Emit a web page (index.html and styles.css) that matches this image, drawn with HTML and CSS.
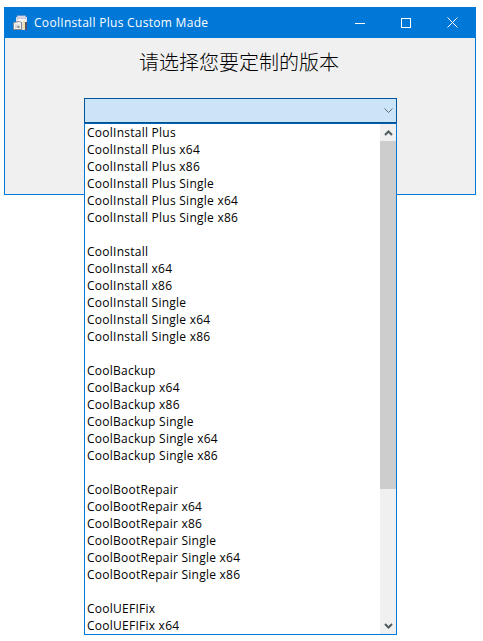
FILE: index.html
```html
<!DOCTYPE html>
<html>
<head>
    <meta charset="utf-8">
    <link rel="stylesheet" href="styles.css">
</head>
<body>
<div class="window">
    <div class="titlebar">
        <svg class="app-icon" width="16" height="16" viewBox="0 0 16 16">
            <path d="M3 2h11v13H3z" fill="#d9dbe6"/>
            <path d="M4 0.500h9v3H4z" fill="#b9b6d0"/>
            <path d="M5 1.500h7v1H5z" fill="#f6f6fa"/>
            <path d="M5 4h8v3H5z" fill="#f4f4f6"/>
            <path d="M10 6h2v8h-2z" fill="#efe3a6"/>
            <path d="M12 7h2v8h-2z" fill="#5a4f68"/>
            <path d="M0.500 7.500l6-1 2 1v7h-8z" fill="#f1f2f2" stroke="#85898d"/>
            <path d="M2 9.500h4.500v3.500H2z" fill="#d3d5d7"/>
            <path d="M4.500 11h2v2h-2z" fill="#8a8e92"/>
        </svg>
        <div class="window-title">CoolInstall Plus Custom Made</div>
        <div class="controls">
            <div class="control">
                <svg width="10" height="10" viewBox="0 0 10 10"><path d="M0 5.500h10" stroke="#fff" fill="none"/></svg>
            </div>
            <div class="control">
                <svg width="10" height="10" viewBox="0 0 10 10"><rect x="0.500" y="0.500" width="9" height="9" stroke="#fff" fill="none"/></svg>
            </div>
            <div class="control">
                <svg width="11" height="11" viewBox="0 0 11 11"><path d="M0.500 0.500l10 10M10.500 0.500l-10 10" stroke="#fff" fill="none"/></svg>
            </div>
        </div>
    </div>

    <div class="client">
        <div class="heading">请选择您要定制的版本</div>

        <div class="combo">
            <div class="combo-box">
                <svg class="combo-arrow" width="9" height="5" viewBox="0 0 9 5"><path d="M0.500 0.500l4 4 4-4" stroke="#5f6a75" fill="none"/></svg>
            </div>

            <!-- Dropdown list -->
            <div class="dropdown">
                <div class="list">
                    <div class="item">CoolInstall Plus</div>
                    <div class="item">CoolInstall Plus x64</div>
                    <div class="item">CoolInstall Plus x86</div>
                    <div class="item">CoolInstall Plus Single</div>
                    <div class="item">CoolInstall Plus Single x64</div>
                    <div class="item">CoolInstall Plus Single x86</div>
                    <div class="item"></div>
                    <div class="item">CoolInstall</div>
                    <div class="item">CoolInstall x64</div>
                    <div class="item">CoolInstall x86</div>
                    <div class="item">CoolInstall Single</div>
                    <div class="item">CoolInstall Single x64</div>
                    <div class="item">CoolInstall Single x86</div>
                    <div class="item"></div>
                    <div class="item">CoolBackup</div>
                    <div class="item">CoolBackup x64</div>
                    <div class="item">CoolBackup x86</div>
                    <div class="item">CoolBackup Single</div>
                    <div class="item">CoolBackup Single x64</div>
                    <div class="item">CoolBackup Single x86</div>
                    <div class="item"></div>
                    <div class="item">CoolBootRepair</div>
                    <div class="item">CoolBootRepair x64</div>
                    <div class="item">CoolBootRepair x86</div>
                    <div class="item">CoolBootRepair Single</div>
                    <div class="item">CoolBootRepair Single x64</div>
                    <div class="item">CoolBootRepair Single x86</div>
                    <div class="item"></div>
                    <div class="item">CoolUEFIFix</div>
                    <div class="item">CoolUEFIFix x64</div>
                </div>
                <div class="scrollbar">
                    <div class="scroll-btn">
                        <svg width="9" height="6" viewBox="0 0 9 6"><path d="M1 5l3.500-3.500L8 5" stroke="#505b60" stroke-width="2" fill="none"/></svg>
                    </div>
                    <div class="scroll-track">
                        <div class="scroll-thumb"></div>
                    </div>
                    <div class="scroll-btn">
                        <svg width="9" height="6" viewBox="0 0 9 6"><path d="M1 1l3.500 3.500L8 1" stroke="#505b60" stroke-width="2" fill="none"/></svg>
                    </div>
                </div>
            </div>
        </div>
    </div>
</div>
</body>
</html>
```

FILE: styles.css
```css
body {
    margin: 0;
    padding: 7px 4px;
    height: 641px;
    box-sizing: border-box;
    background: #fff;
    font-family: "Open Sans", "Noto Sans", sans-serif;
    font-size: 12px;
    color: #000;
}
.window {
    width: 472px;
    height: 188px;
    box-sizing: border-box;
    border: 1px solid #0078d7;
    border-top: none;
    background: #f0f0f0;
    display: flex;
    flex-direction: column;
}
.titlebar {
    height: 31px;
    margin: 0 -1px;
    padding-left: 9px;
    background: #0078d7;
    color: #fff;
    display: flex;
    align-items: center;
    flex-shrink: 0;
}
.app-icon {
    margin-right: 5px;
}
.window-title {
    flex: 1;
    font-size: 12px;
    letter-spacing: 0.3px;
    white-space: nowrap;
}
.controls {
    display: flex;
    margin-right: 1px;
    height: 100%;
}
.control {
    width: 46px;
    display: flex;
    align-items: center;
    justify-content: center;
}
.client {
    flex: 1;
    padding: 0 78px 0 79px;
}
.heading {
    height: 60px;
    padding: 9px 3px 0 0;
    box-sizing: border-box;
    text-align: center;
    font-family: "Noto Sans CJK SC", sans-serif;
    font-size: 20px;
    font-weight: 300;
    line-height: 29px;
    color: #000;
}
.combo {
    position: relative;
}
.combo-box {
    height: 25px;
    box-sizing: border-box;
    border: 1px solid #005499;
    background: #cce4f7;
    display: flex;
    align-items: center;
    justify-content: flex-end;
    padding-right: 3px;
}
.dropdown {
    position: absolute;
    top: 25px;
    left: 0;
    right: 0;
    height: 512px;
    box-sizing: border-box;
    border: 1px solid #0078d7;
    border-top-color: #005fb0;
    background: #fff;
    display: flex;
}
.list {
    flex: 1;
    height: 510px;
    overflow: hidden;
}
.item {
    height: 17px;
    line-height: 17px;
    padding-left: 2px;
    letter-spacing: 0.25px;
    white-space: nowrap;
}
.scrollbar {
    width: 16px;
    background: #f0f0f0;
    display: flex;
    flex-direction: column;
}
.scroll-btn {
    height: 17px;
    display: flex;
    align-items: center;
    justify-content: center;
    flex-shrink: 0;
}
.scroll-track {
    flex: 1;
}
.scroll-thumb {
    height: 348px;
    background: #cdcdcd;
}
```
